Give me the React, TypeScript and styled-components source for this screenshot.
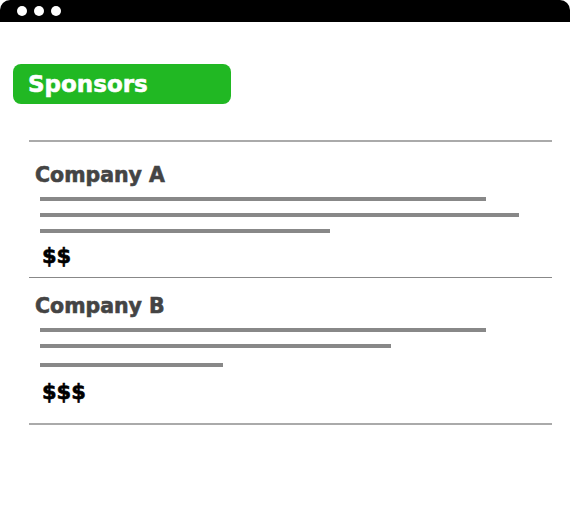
import React from "react";
import styled, { createGlobalStyle } from "styled-components";

const GlobalStyle = createGlobalStyle`
  html, body { margin: 0; padding: 0; background: #ffffff; }
  body { font-family: "DejaVu Sans", "Liberation Sans", Arial, sans-serif; }
`;

const Frame = styled.div`
  width: 570px;
  height: 507px;
  background: #ffffff;
  border-radius: 10px;
  overflow: hidden;
  display: flex;
  flex-direction: column;
`;

const TitleBar = styled.div`
  height: 22px;
  background: #000000;
  display: flex;
  align-items: center;
  gap: 7px;
  padding-left: 17px;
  flex-shrink: 0;
`;

const Dot = styled.span`
  width: 10px;
  height: 10px;
  border-radius: 50%;
  background: #ffffff;
`;

const Content = styled.div`
  display: flex;
  flex-direction: column;
  padding: 42px 0 0 13px;
`;

const Badge = styled.div`
  width: 218px;
  height: 40px;
  box-sizing: border-box;
  background: #21b823;
  border-radius: 8px;
  display: flex;
  align-items: center;
  padding-left: 15px;
  color: #ffffff;
  font-family: "DejaVu Sans", sans-serif;
  font-weight: 700;
  font-size: 23px;
  -webkit-text-stroke: 0.6px #ffffff;
`;

const List = styled.div`
  margin: 36px 0 0 16px;
  width: 523px;
  border-top: 2px solid #aaaaaa;
  border-bottom: 2px solid #aaaaaa;
  display: flex;
  flex-direction: column;
`;

const Item = styled.div<{ $top: number; $bottom: number; $last?: boolean }>`
  padding: ${(p) => p.$top}px 0 ${(p) => p.$bottom}px 0;
  border-bottom: ${(p) => (p.$last ? "none" : "1px solid #888888")};
  display: flex;
  flex-direction: column;
`;

const Company = styled.div`
  margin-left: 6px;
  font-family: "DejaVu Sans", sans-serif;
  font-size: 20.5px;
  line-height: 24px;
  font-weight: 700;
  color: #444444;
  -webkit-text-stroke: 0.6px #444444;
`;

const Lines = styled.div`
  margin: 10px 0 0 11px;
  display: flex;
  flex-direction: column;
`;

const Line = styled.div<{ $gap: number }>`
  height: 4px;
  background: #888888;
  margin-top: ${(p) => p.$gap}px;
`;

const Price = styled.div<{ $gap: number }>`
  margin: ${(p) => p.$gap}px 0 0 13px;
  font-family: "DejaVu Sans", sans-serif;
  font-size: 21px;
  line-height: 24px;
  font-weight: 700;
  color: #000000;
  -webkit-text-stroke: 0.6px #000000;
`;

type Sponsor = {
  name: string;
  lines: { w: number; gap: number }[];
  price: string;
  priceGap: number;
  top: number;
  bottom: number;
};

const sponsors: Sponsor[] = [
  {
    name: "Company A",
    lines: [
      { w: 446, gap: 0 },
      { w: 479, gap: 12 },
      { w: 290, gap: 12 },
    ],
    price: "$$",
    priceGap: 11,
    top: 21,
    bottom: 9,
  },
  {
    name: "Company B",
    lines: [
      { w: 446, gap: 0 },
      { w: 351, gap: 12 },
      { w: 183, gap: 15 },
    ],
    price: "$$$",
    priceGap: 13,
    top: 16,
    bottom: 19,
  },
];

export default function App() {
  return (
    <>
      <GlobalStyle />
      <Frame>
        <TitleBar>
          <Dot />
          <Dot />
          <Dot />
        </TitleBar>
        <Content>
          <Badge>Sponsors</Badge>
          <List>
            {sponsors.map((s, i) => (
              <Item key={s.name} $top={s.top} $bottom={s.bottom} $last={i === sponsors.length - 1}>
                <Company>{s.name}</Company>
                <Lines>
                  {s.lines.map((l, j) => (
                    <Line key={j} $gap={l.gap} style={{ width: l.w }} />
                  ))}
                </Lines>
                <Price $gap={s.priceGap}>{s.price}</Price>
              </Item>
            ))}
          </List>
        </Content>
      </Frame>
    </>
  );
}
